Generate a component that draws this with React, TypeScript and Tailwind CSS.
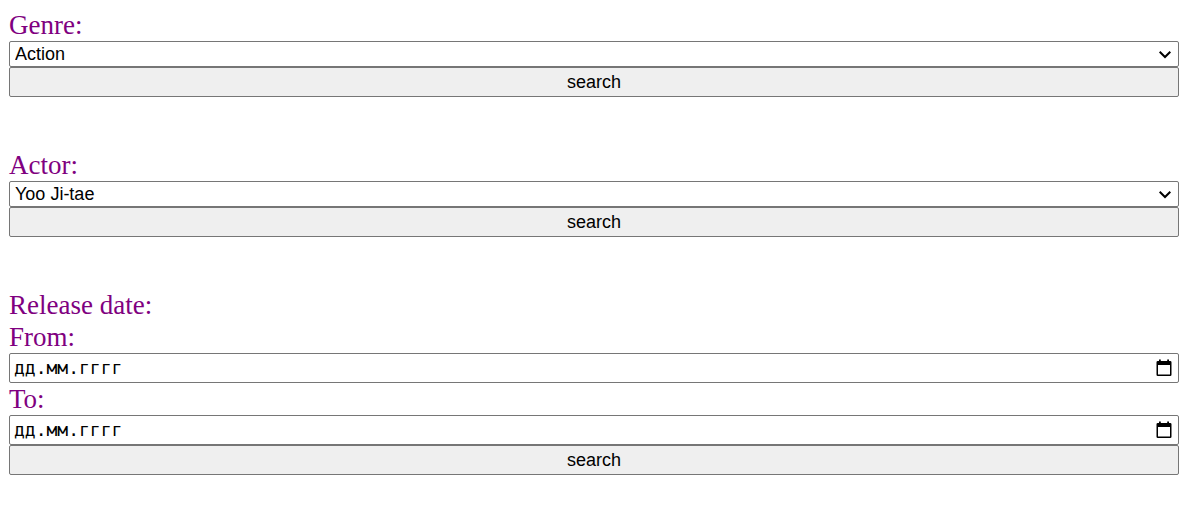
import { useRef } from "react";

const control =
  "block w-full rounded-[2px] border border-[#767676] font-['Liberation_Sans',Arial,sans-serif] text-[18px] text-black";

function SearchButton() {
  return (
    <button type="submit" className={`${control} h-[30px] bg-[#efefef] leading-7 hover:bg-[#e5e5e5]`}>
      search
    </button>
  );
}

function SelectField({ id, label, options }: { id: string; label: string; options: string[] }) {
  return (
    <form className="flex flex-col" onSubmit={(e) => e.preventDefault()}>
      <label htmlFor={id}>{label}</label>
      <div className="relative">
        <select id={id} name={id} className={`${control} h-[26px] appearance-none bg-white pr-8 pl-[5px] leading-6`}>
          {options.map((option) => (
            <option key={option}>{option}</option>
          ))}
        </select>
        <svg
          viewBox="0 0 12 8"
          className="pointer-events-none absolute top-[10px] right-2 h-2 w-3"
          fill="none"
          stroke="black"
          strokeWidth="2"
          aria-hidden="true"
        >
          <path d="M0.7 0.8 6 6l5.300-5.200" />
        </svg>
      </div>
      <SearchButton />
    </form>
  );
}

function DateField({ id, label }: { id: string; label: string }) {
  const input = useRef<HTMLInputElement>(null);
  return (
    <>
      <label htmlFor={id}>{label}</label>
      <div className="flex h-[30px] items-center rounded-[2px] border border-[#767676] bg-white pr-[6px] pl-1">
        <input
          ref={input}
          id={id}
          name={id}
          type="text"
          inputMode="numeric"
          placeholder="дд.мм.гггг"
          className="min-w-0 flex-1 font-['DejaVu_Sans_Mono',monospace] text-[18px] leading-7 text-black outline-none placeholder:text-black"
        />
        <button type="button" aria-label="Open calendar" onClick={() => input.current?.focus()}>
          <svg viewBox="0 0 16 18" className="h-[18px] w-4" aria-hidden="true">
            <path
              fill="black"
              fillRule="evenodd"
              d="M3 0.500h1.800v1.500h6.400V0.500H13v1.500h1.200q1.300 0 1.300 1.300v12.400q0 1.300-1.300 1.300H1.800Q0.500 17 0.500 15.700V3.300Q0.500 2 1.800 2H3ZM2 6v9.500h12V6Z"
            />
          </svg>
        </button>
      </div>
    </>
  );
}

export default function App() {
  return (
    <main className="flex min-h-screen flex-col gap-[52px] bg-white pt-[9px] pr-[6px] pb-9 pl-[9px] font-['Liberation_Serif','Times_New_Roman',serif] text-[27px] leading-8 text-[#800080]">
      <SelectField id="genre" label="Genre:" options={["Action", "Comedy", "Drama"]} />
      <SelectField id="actor" label="Actor:" options={["Yoo Ji-tae"]} />
      <form className="flex flex-col" onSubmit={(e) => e.preventDefault()}>
        <p>Release date:</p>
        <DateField id="from" label="From:" />
        <DateField id="to" label="To:" />
        <SearchButton />
      </form>
    </main>
  );
}
